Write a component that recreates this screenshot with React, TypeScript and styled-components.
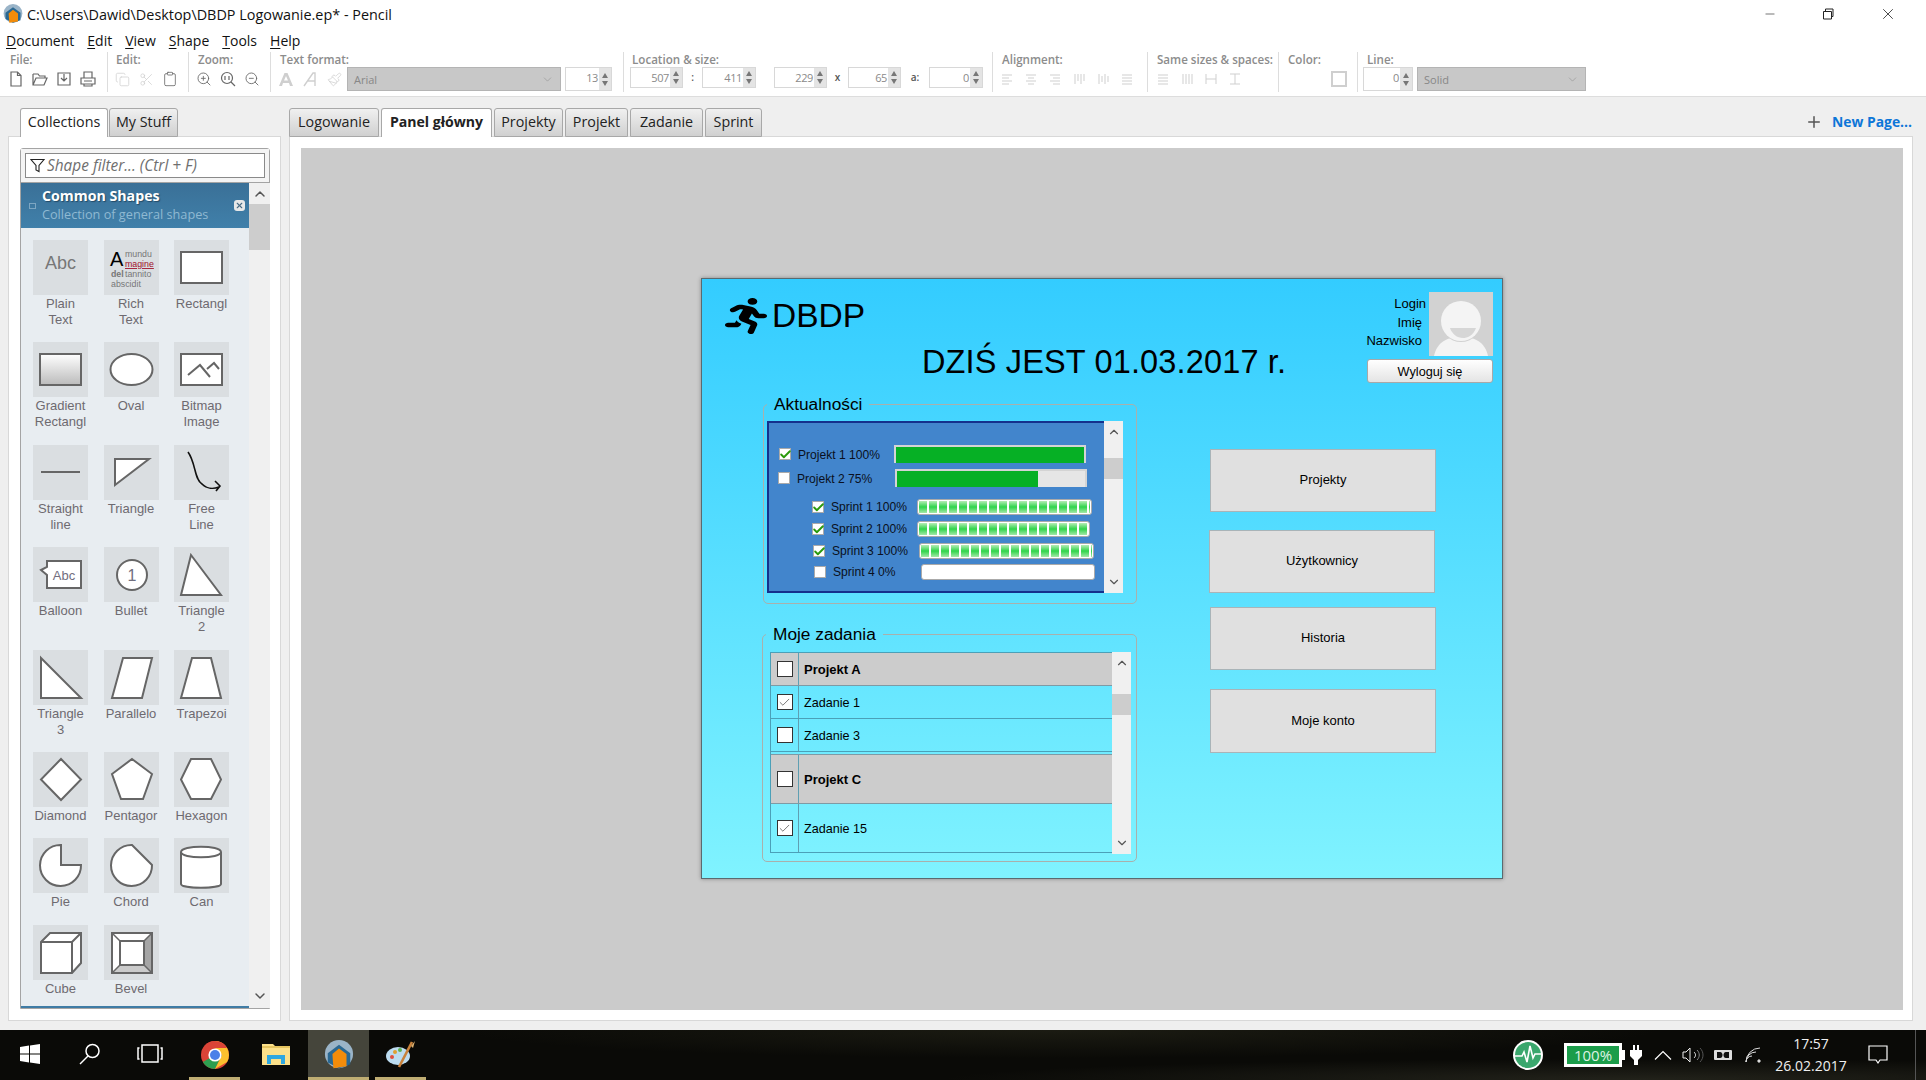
import React from "react";
import styled, { createGlobalStyle } from "styled-components";
import {
  Check,
  ChevronDown,
  ChevronUp,
  Clipboard,
  Copy,
  Minus,
  Paintbrush,
  Plus,
  Scissors,
  X,
  ZoomIn,
  ZoomOut,
} from "lucide-react";
import { FaRunning } from "react-icons/fa";

const UI_FONT = `"Open Sans", "Noto Sans", sans-serif`;
const ARIAL = `"Liberation Sans", Arial, sans-serif`;

const GlobalStyle = createGlobalStyle`
  html, body {
    margin: 0;
    padding: 0;
    height: 100%;
    overflow: hidden;
    background: #efefef;
  }
  * { box-sizing: border-box; }
`;

const Window = styled.div`
  width: 1926px;
  height: 1080px;
  display: flex;
  flex-direction: column;
  background: #efefef;
  font-family: ${UI_FONT};
  color: #111;
`;

/* title + menu */
const TitleBar = styled.div`
  height: 28px;
  flex: none;
  background: #fff;
  display: flex;
  align-items: center;
  padding-left: 3px;
  font-size: 14.4px;
`;

const TitleText = styled.span`
  margin-left: 4px;
  flex: 1;
  white-space: nowrap;
`;

const WindowControls = styled.div`
  display: flex;
  align-items: center;
  padding-right: 29px;
  gap: 45px;
`;

const MenuBar = styled.div`
  height: 24px;
  flex: none;
  background: #fff;
  display: flex;
  align-items: center;
  padding-left: 6px;
  gap: 13px;
  font-size: 14px;
`;

const MenuItem = styled.span`
  white-space: nowrap;
  u { text-underline-offset: 2px; }
`;

/* toolbar */
const Toolbar = styled.div`
  height: 45px;
  flex: none;
  background: #fff;
  border-bottom: 1px solid #ddd;
  padding-left: 8px;
  display: flex;
  align-items: flex-start;
`;

const ToolGroup = styled.div<{ $w: number; $pad?: number; $last?: boolean }>`
  width: ${(p) => p.$w}px;
  height: 40px;
  flex: none;
  padding-left: ${(p) => p.$pad ?? 9}px;
  border-right: ${(p) => (p.$last ? "none" : "1px solid #ddd")};
`;

const ToolLabel = styled.div<{ $ml?: number }>`
  height: 15px;
  line-height: 15px;
  font-size: 11.6px;
  font-weight: 600;
  color: #8c8c8c;
  white-space: nowrap;
  margin-left: ${(p) => p.$ml ?? 0}px;
`;

const ToolRow = styled.div<{ $ml?: number; $gap?: number }>`
  display: flex;
  align-items: center;
  height: 24px;
  margin-left: ${(p) => p.$ml ?? -4}px;
  gap: ${(p) => p.$gap ?? 4}px;
`;

const ToolIcon = styled.span<{ $off?: boolean }>`
  width: 20px;
  height: 20px;
  flex: none;
  display: inline-flex;
  align-items: center;
  justify-content: center;
  color: ${(p) => (p.$off ? "#cfcfcf" : "#666")};
`;

const SpinBox = styled.div<{ $w: number; $h?: number }>`
  width: ${(p) => p.$w}px;
  height: ${(p) => p.$h ?? 24}px;
  flex: none;
  display: flex;
  align-self: flex-start;
  border: 1px solid #d8d8d8;
  background: #fff;
`;

const SpinValue = styled.div`
  flex: 1;
  text-align: right;
  padding-right: 1px;
  font-family: ${UI_FONT};
  font-size: 11px;
  line-height: 19px;
  letter-spacing: -0.4px;
  color: #8a8a8a;
`;

const SpinArrows = styled.div`
  width: 12px;
  display: flex;
  flex-direction: column;
  align-items: center;
  justify-content: center;
  gap: 3px;
  background: #e4e4e4;
`;

const ArrowUp = styled.i`
  width: 0;
  height: 0;
  border-left: 3.5px solid transparent;
  border-right: 3.5px solid transparent;
  border-bottom: 5px solid #777;
`;

const ArrowDown = styled(ArrowUp)`
  border-bottom: none;
  border-top: 5px solid #777;
`;

const SelectBox = styled.div<{ $w: number; $ml?: number }>`
  width: ${(p) => p.$w}px;
  height: 24px;
  flex: none;
  margin-left: ${(p) => p.$ml ?? 0}px;
  display: flex;
  align-items: center;
  justify-content: space-between;
  padding: 0 6px;
  background: #c8c8c8;
  border: 1px solid #b4b4b4;
  color: #878787;
  font-size: 11px;
`;

const SizeSep = styled.span<{ $w: number }>`
  width: ${(p) => p.$w}px;
  flex: none;
  align-self: flex-start;
  line-height: 21px;
  text-align: center;
  font-size: 10px;
  font-weight: 600;
  color: #555;
`;

const ColorSwatch = styled.div`
  width: 16px;
  height: 16px;
  margin-left: 43px;
  border: 2px solid #cfcfcf;
  background: #fff;
`;

/* workspace */
const Workspace = styled.div`
  flex: 1;
  min-height: 0;
  display: flex;
  padding: 11px 13px 9px 8px;
  gap: 8px;
`;

const LeftColumn = styled.div`
  width: 273px;
  flex: none;
  display: flex;
  flex-direction: column;
`;

const RightColumn = styled.div`
  flex: 1;
  min-width: 0;
  display: flex;
  flex-direction: column;
`;

const TabStrip = styled.div<{ $pad?: number; $gap?: number }>`
  height: 28px;
  flex: none;
  display: flex;
  align-items: flex-start;
  padding-left: ${(p) => p.$pad ?? 0}px;
  gap: ${(p) => p.$gap ?? 2}px;
`;

const Tab = styled.div<{ $w: number; $active?: boolean; $bold?: boolean }>`
  width: ${(p) => p.$w}px;
  height: 29px;
  flex: none;
  border: 1px solid #a8a8a8;
  border-bottom: ${(p) => (p.$active ? "none" : "1px solid #a8a8a8")};
  border-radius: 3px 3px 0 0;
  background: ${(p) =>
    p.$active ? "#fff" : "linear-gradient(#f0f0f0, #d0d0d0)"};
  font-size: ${(p) => (p.$bold ? 14.1 : 14.3)}px;
  font-weight: ${(p) => (p.$bold ? 700 : 400)};
  line-height: 25px;
  text-align: center;
  white-space: nowrap;
  position: relative;
  z-index: ${(p) => (p.$active ? 1 : 0)};
  color: #222;
`;

const NewPage = styled.div`
  margin-left: auto;
  display: flex;
  align-items: center;
  height: 27px;
  gap: 9px;
  color: #0d76d8;
  font-size: 13.9px;
  font-weight: 700;
  padding-right: 1px;
  white-space: nowrap;
  svg { color: #555; }
`;

const LeftPanel = styled.div`
  flex: 1;
  min-height: 0;
  background: #fff;
  border: 1px solid #d8d8d8;
  padding: 11px 10px 11px 11px;
`;

const ShapeBox = styled.div`
  height: 100%;
  border: 1px solid #a4a4a4;
  border-radius: 3px 3px 0 0;
  display: flex;
  flex-direction: column;
`;

const FilterBar = styled.div`
  height: 34px;
  flex: none;
  padding: 4px;
  border-bottom: 1px solid #a4a4a4;
  background: #f4f4f4;
`;

const FilterInput = styled.div`
  height: 25px;
  background: #fff;
  border: 1px solid #8a8a8a;
  display: flex;
  align-items: center;
  padding-left: 4px;
  gap: 2px;
  font-size: 15.4px;
  font-style: italic;
  white-space: nowrap;
  color: #6f6f6f;
`;

const ShapeBody = styled.div`
  flex: 1;
  min-height: 0;
  display: flex;
  background: #fff;
`;

const ShapeColumn = styled.div`
  width: 228px;
  flex: none;
  background: #e8edf1;
  border-bottom: 2px solid #3f7ca5;
  display: flex;
  flex-direction: column;
  overflow: hidden;
`;

const ShapeHeader = styled.div`
  height: 45px;
  flex: none;
  position: relative;
  background: linear-gradient(#3a7097, #4080aa);
  padding: 3px 0 0 21px;
`;

const ShapeHeaderTitle = styled.div`
  font-size: 14.2px;
  font-weight: 700;
  line-height: 19px;
  color: #fff;
  text-shadow: 1px 1px 1px #234a66;
`;

const ShapeHeaderSub = styled.div`
  font-size: 12.7px;
  line-height: 18px;
  color: #8fb9d2;
  white-space: nowrap;
`;

const CollapseMark = styled.span`
  position: absolute;
  left: 8px;
  top: 20px;
  width: 7px;
  height: 6px;
  border: 1px solid #7da6c2;
  background: linear-gradient(transparent 40%, #9cc0d8 40% 60%, transparent 60%);
`;

const CloseMark = styled.span`
  position: absolute;
  right: 4px;
  top: 17px;
  width: 11px;
  height: 11px;
  border-radius: 3px;
  background: #e8e8e8;
  color: #4a6c85;
  display: flex;
  align-items: center;
  justify-content: center;
`;

const ShapeGrid = styled.div`
  display: grid;
  grid-template-columns: repeat(3, 55px);
  column-gap: 15.5px;
  row-gap: 14.4px;
  padding: 12px 0 0 12px;
  align-content: start;
`;

const ShapeItem = styled.div`
  width: 55px;
  overflow: hidden;
`;

const ShapeTile = styled.div`
  width: 55px;
  height: 55px;
  background: #dadee1;
`;

const ShapeName = styled.div`
  font-family: ${ARIAL};
  font-size: 13px;
  line-height: 16px;
  padding-top: 1px;
  color: #6e6a70;
  text-align: center;
  white-space: pre;
`;

const Scrollbar = styled.div<{ $w: number }>`
  width: ${(p) => p.$w}px;
  flex: none;
  background: #f0f0f0;
  display: flex;
  flex-direction: column;
  align-items: stretch;
`;

const ScrollArrow = styled.div<{ $h: number }>`
  height: ${(p) => p.$h}px;
  flex: none;
  display: flex;
  align-items: center;
  justify-content: center;
  color: #555;
`;

const ScrollTrack = styled.div`
  flex: 1;
  min-height: 0;
`;

const ScrollThumb = styled.div<{ $top: number; $h: number }>`
  margin-top: ${(p) => p.$top}px;
  height: ${(p) => p.$h}px;
  background: #cdcdcd;
`;

const DocPanel = styled.div`
  flex: 1;
  min-height: 0;
  background: #fff;
  border: 1px solid #d8d8d8;
  padding: 11px 9px 10px 11px;
`;

const Canvas = styled.div`
  height: 100%;
  background: #cbcbcb;
  padding: 130px 0 0 400px;
  overflow: hidden;
`;

/* the drawn page: a free canvas, every shape sits where the author dropped it */
const Page = styled.div`
  position: relative;
  width: 802px;
  height: 601px;
  border: 1px solid #5a6a70;
  box-shadow: 0 0 4px rgba(0, 0, 0, 0.35);
  background: linear-gradient(#33ccff, #80f3ff);
  font-family: ${ARIAL};
  color: #000;
`;

const RunnerMark = styled.div`
  position: absolute;
  left: 23px;
  top: 19px;
  svg {
    display: block;
    width: 42px;
    height: 36px;
  }
`;

const BrandName = styled.div`
  position: absolute;
  left: 70px;
  top: 18px;
  font-size: 33.5px;
  line-height: 38px;
`;

const DateHeading = styled.div`
  position: absolute;
  left: 220px;
  top: 64px;
  font-size: 32.5px;
  letter-spacing: 0.15px;
  line-height: 38px;
  white-space: nowrap;
`;

const UserInfo = styled.div`
  position: absolute;
  left: 640px;
  top: 16px;
  width: 80px;
  font-size: 13px;
  line-height: 18.5px;
  text-align: right;
`;

const UserLine = styled.div<{ $shift?: number }>`
  margin-right: ${(p) => p.$shift ?? 0}px;
`;

const Avatar = styled.div`
  position: absolute;
  left: 727px;
  top: 13px;
  width: 64px;
  height: 64px;
  svg { display: block; }
`;

const LogoutButton = styled.div`
  position: absolute;
  left: 665px;
  top: 80px;
  width: 126px;
  height: 24px;
  border: 1px solid #a8a8a8;
  border-radius: 3px;
  background: linear-gradient(#fff, #e4e4e4);
  text-align: center;
  font-size: 12.7px;
  line-height: 24px;
`;

const NavButton = styled.div<{ $x: number; $y: number; $h?: number }>`
  position: absolute;
  left: ${(p) => p.$x}px;
  top: ${(p) => p.$y}px;
  width: 226px;
  height: ${(p) => p.$h ?? 63}px;
  padding: 0 0 2px 0;
  background: #e0e0e0;
  border: 1px solid #a9b4b8;
  display: flex;
  align-items: center;
  justify-content: center;
  font-size: 13px;
`;

const GroupFrame = styled.fieldset<{
  $x: number;
  $y: number;
  $w: number;
  $h: number;
  $padX: number;
  $padY: number;
}>`
  position: absolute;
  left: ${(p) => p.$x}px;
  top: ${(p) => p.$y}px;
  width: ${(p) => p.$w}px;
  height: ${(p) => p.$h}px;
  margin: 0;
  padding: ${(p) => p.$padY}px 0 0 ${(p) => p.$padX}px;
  border: 1px solid #a9b0ac;
  border-radius: 5px;
  min-width: 0;
`;

const GroupTitle = styled.legend<{ $ml: number }>`
  margin-left: ${(p) => p.$ml}px;
  padding: 0 7px;
  font-size: 17.3px;
  line-height: 20px;
  white-space: nowrap;
`;

const NewsPanel = styled.div`
  display: flex;
  height: 172px;
`;

const NewsList = styled.div`
  width: 337px;
  flex: none;
  background: #4285cc;
  border: 2px solid #14308c;
  border-right: none;
`;

const NewsRow = styled.div<{ $ml: number; $mt: number }>`
  display: flex;
  align-items: center;
  margin-left: ${(p) => p.$ml}px;
  margin-top: ${(p) => p.$mt}px;
`;

const NewsCheck = styled.span`
  width: 12px;
  height: 12px;
  flex: none;
  background: #fff;
  border: 1px solid #aaa;
  display: flex;
  align-items: center;
  justify-content: center;
  color: #2a9a0c;
  svg { flex: none; }
`;

const NewsLabel = styled.span<{ $w: number; $drop?: boolean }>`
  width: ${(p) => p.$w}px;
  flex: none;
  margin-left: 7px;
  padding-top: ${(p) => (p.$drop ? 2 : 0)}px;
  font-size: 12.1px;
  white-space: nowrap;
  color: #0a1020;
`;

const SolidBar = styled.div<{ $w: number }>`
  width: ${(p) => p.$w}px;
  height: 18px;
  flex: none;
  background: #e6e6e6;
  border: 2px solid #d4d4d4;
  border-bottom: none;
`;

const SolidFill = styled.div`
  height: 100%;
  background: #06b025;
`;

const SegmentBar = styled.div<{ $w: number }>`
  width: ${(p) => p.$w}px;
  height: 16px;
  flex: none;
  background: #fff;
  border: 1px solid #aaa;
  border-radius: 3px;
  padding: 1px;
`;

const SegmentFill = styled.div`
  height: 100%;
  background:
    repeating-linear-gradient(90deg, transparent 0 8px, #fff 8px 10px),
    linear-gradient(#b5ecb5, #2fd44a 50%, #a4e8a8);
`;

const TaskPanel = styled.div`
  display: flex;
  height: 202px;
`;

const TaskTable = styled.div`
  width: 342px;
  flex: none;
  height: 201px;
  border-top: 1px solid #4ba0b8;
  border-left: 1px solid #4ba0b8;
`;

const TaskRow = styled.div<{ $h: number; $group?: boolean; $gap?: boolean }>`
  height: ${(p) => p.$h}px;
  display: flex;
  background: ${(p) => (p.$group ? "#cccccc" : "transparent")};
  border-bottom: 1px solid ${(p) => (p.$group ? "#7f9aa4" : "#4ba0b8")};
  border-top: ${(p) => (p.$gap ? "1px solid #7f9aa4" : "none")};
  margin-top: ${(p) => (p.$gap ? 2 : 0)}px;
  font-size: ${(p) => (p.$group ? 13 : 12.6)}px;
  font-weight: ${(p) => (p.$group ? 700 : 400)};
`;

const CheckCell = styled.div`
  width: 28px;
  flex: none;
  display: flex;
  align-items: center;
  justify-content: center;
  border-right: 1px solid #5f9fb2;
`;

const TaskCheck = styled.span`
  width: 16px;
  height: 16px;
  background: #fff;
  border: 1px solid #333;
  display: flex;
  align-items: center;
  justify-content: center;
  color: #666;
`;

const TaskName = styled.div<{ $group?: boolean }>`
  flex: 1;
  display: flex;
  align-items: center;
  padding: ${(p) => (p.$group ? 0 : 1)}px 0 0 5px;
`;

/* taskbar */
const Taskbar = styled.div`
  height: 50px;
  flex: none;
  position: relative;
  display: flex;
  align-items: center;
  background:
    radial-gradient(ellipse at 55% 0%, rgba(60, 60, 40, 0.35), transparent 40%),
    radial-gradient(ellipse at 85% 100%, rgba(70, 70, 55, 0.4), transparent 30%),
    #0a0a07;
  color: #fff;
`;

const TaskButton = styled.div<{
  $w: number;
  $ml?: number;
  $pl?: number;
  $active?: boolean;
  $bar?: boolean;
}>`
  width: ${(p) => p.$w}px;
  height: 50px;
  flex: none;
  margin-left: ${(p) => p.$ml ?? 0}px;
  display: flex;
  align-items: center;
  justify-content: center;
  background: ${(p) => (p.$active ? "#45453b" : "transparent")};
  border-bottom: 3px solid ${(p) => (p.$bar ? "#bfad72" : "transparent")};
  padding-top: ${(p) => (p.$bar ? 3 : 0)}px;
  padding-left: ${(p) => p.$pl ?? 0}px;
`;

const Tray = styled.div`
  margin-left: auto;
  display: flex;
  align-items: center;
  height: 50px;
  padding-right: 10px;
`;

const Battery = styled.div`
  position: relative;
  width: 58px;
  height: 24px;
  margin: 0 5px 0 21px;
  border: 3px solid #fff;
  background: #1b9d4a;
  color: #dff3e4;
  font-family: ${UI_FONT};
  font-size: 15px;
  line-height: 18px;
  text-align: center;
  &::after {
    content: "";
    position: absolute;
    right: -6px;
    top: 4px;
    width: 3px;
    height: 10px;
    background: #fff;
  }
`;

const TrayIcon = styled.div<{ $w: number; $ml?: number }>`
  width: ${(p) => p.$w}px;
  flex: none;
  margin-left: ${(p) => p.$ml ?? 0}px;
  display: flex;
  align-items: center;
  justify-content: center;
`;

const Clock = styled.div`
  width: 92px;
  flex: none;
  text-align: center;
  font-size: 14px;
  line-height: 22px;
  color: #f0f0f0;
  white-space: nowrap;
`;

const TrayEdge = styled.div`
  width: 1px;
  height: 50px;
  margin-left: 17px;
  background: #555;
`;

type ShapeDef = { name: string; art: React.ReactNode };

const st = {
  fill: "#fff",
  stroke: "#666",
  strokeWidth: 2,
} as const;

const shapes: ShapeDef[] = [
  {
    name: "Plain\nText",
    art: (
      <text x="27.5" y="29" textAnchor="middle" fontSize="18" fontFamily={ARIAL} fill="#777">
        Abc
      </text>
    ),
  },
  {
    name: "Rich\nText",
    art: (
      <g fontFamily={ARIAL} fontSize="8.8" fill="#777">
        <text x="6" y="26" fontSize="20" fill="#000">A</text>
        <text x="21" y="17">mundu</text>
        <text x="21" y="27" fill="#a0102a" textDecoration="underline">magine</text>
        <text x="7" y="37" fontWeight="700">del</text>
        <text x="21" y="37">tannito</text>
        <text x="7" y="47">abscidit</text>
      </g>
    ),
  },
  { name: "Rectangl", art: <rect x="7" y="12" width="41" height="31" {...st} /> },
  {
    name: "Gradient\nRectangl",
    art: (
      <>
        <defs>
          <linearGradient id="tileGrad" x1="0" y1="0" x2="0" y2="1">
            <stop offset="0" stopColor="#fff" />
            <stop offset="1" stopColor="#bbb" />
          </linearGradient>
        </defs>
        <rect x="7" y="12" width="41" height="31" fill="url(#tileGrad)" stroke="#666" strokeWidth="2" />
      </>
    ),
  },
  { name: "Oval", art: <ellipse cx="27.5" cy="27.5" rx="21" ry="15.5" {...st} /> },
  {
    name: "Bitmap\nImage",
    art: (
      <>
        <rect x="7" y="12" width="41" height="31" {...st} />
        <path d="M14 33 L26 23 L36 35 M33 27 L40 21 L45 27" fill="none" stroke="#666" strokeWidth="2" />
      </>
    ),
  },
  {
    name: "Straight\nline",
    art: <line x1="8" y1="27" x2="47" y2="27" stroke="#666" strokeWidth="2" />,
  },
  { name: "Triangle", art: <polygon points="11,14 45,14 11,40" {...st} /> },
  {
    name: "Free\nLine",
    art: (
      <path
        d="M14 7 C22 18 20 34 28 39 C33 44 40 44 45 42 M41 36 L46 41 L42 46"
        fill="none"
        stroke="#111"
        strokeWidth="1.6"
      />
    ),
  },
  {
    name: "Balloon",
    art: (
      <>
        <path d="M14 14 H48 V41 H14 V28 L8 23 L14 20 Z" {...st} />
        <text x="31" y="33" textAnchor="middle" fontSize="13" fontFamily={ARIAL} fill="#716e7e">
          Abc
        </text>
      </>
    ),
  },
  {
    name: "Bullet",
    art: (
      <>
        <circle cx="28" cy="28" r="15" {...st} />
        <text x="28" y="34" textAnchor="middle" fontSize="16" fontFamily={ARIAL} fill="#716e7e">
          1
        </text>
      </>
    ),
  },
  { name: "Triangle\n2", art: <polygon points="17,8 47,48 7,48" {...st} /> },
  { name: "Triangle\n3", art: <polygon points="8,8 48,48 8,48" {...st} /> },
  { name: "Parallelo", art: <polygon points="19,8 48,8 38,48 8,48" {...st} /> },
  { name: "Trapezoi", art: <polygon points="18,8 37,8 47,48 7,48" {...st} /> },
  { name: "Diamond", art: <polygon points="28,7 48,27.5 28,48 8,27.5" {...st} /> },
  { name: "Pentagor", art: <polygon points="28,7 48,22 39,47 17,47 8,22" {...st} /> },
  { name: "Hexagon", art: <polygon points="17,7 37,7 47,27.5 37,47 17,47 7,27.5" {...st} /> },
  {
    name: "Pie",
    art: <path d="M28 7 A20.5 20.5 0 1 0 48 27 H28 Z" {...st} />,
  },
  {
    name: "Chord",
    art: <path d="M28 7 L48 27 A20.5 20.5 0 1 1 28 7 Z" {...st} />,
  },
  {
    name: "Can",
    art: (
      <>
        <path d="M7 12 C7 5 47 5 47 12 V44 C47 49 7 49 7 44 Z" transform="translate(0 2)" {...st} />
        <path d="M7 14 C7 21 47 21 47 14" fill="none" stroke="#666" strokeWidth="2" />
      </>
    ),
  },
  {
    name: "Cube",
    art: (
      <>
        <path d="M8 17 L17 8 H48 V38 L39 48 H8 Z" {...st} />
        <path d="M8 17 H39 V48 M39 17 L48 8" fill="none" stroke="#666" strokeWidth="2" />
      </>
    ),
  },
  {
    name: "Bevel",
    art: (
      <>
        <rect x="8" y="8" width="40" height="40" {...st} />
        <polygon points="40,16 47,9 47,47 40,40" fill="#a5a5a5" />
        <polygon points="16,40 40,40 47,47 9,47" fill="#cbcbcb" />
        <rect x="16" y="16" width="24" height="24" fill="#fff" stroke="#666" strokeWidth="2" />
        <path d="M8 8 L16 16 M48 8 L40 16 M8 48 L16 40 M48 48 L40 40" stroke="#666" strokeWidth="1.5" />
      </>
    ),
  },
];

const news = [
  { label: "Projekt 1 100%", checked: true, value: 100, ml: 10, mt: 22, lw: 96, bw: 192 },
  { label: "Projekt 2 75%", checked: false, value: 75, ml: 9, mt: 6, lw: 98, bw: 192 },
  { label: "Sprint 1 100%", checked: true, value: 100, ml: 43, mt: 12, lw: 86, bw: 175, sprint: true },
  { label: "Sprint 2 100%", checked: true, value: 100, ml: 43, mt: 6, lw: 86, bw: 173, sprint: true },
  { label: "Sprint 3 100%", checked: true, value: 100, ml: 44, mt: 6, lw: 87, bw: 175, sprint: true },
  { label: "Sprint 4 0%", checked: false, value: 0, ml: 45, mt: 5, lw: 88, bw: 174, sprint: true },
];

const tasks = [
  { name: "Projekt A", h: 33, group: true },
  { name: "Zadanie 1", h: 33, checked: true },
  { name: "Zadanie 3", h: 33 },
  { name: "Projekt C", h: 50, group: true, gap: true },
  { name: "Zadanie 15", h: 49, checked: true },
];

const pageTabs = [
  { name: "Logowanie", w: 90 },
  { name: "Panel główny", w: 111, active: true },
  { name: "Projekty", w: 69 },
  { name: "Projekt", w: 63 },
  { name: "Zadanie", w: 73 },
  { name: "Sprint", w: 57 },
];

const Spin = ({ value, w, h }: { value: string; w: number; h?: number }) => (
  <SpinBox $w={w} $h={h}>
    <SpinValue>{value}</SpinValue>
    <SpinArrows>
      <ArrowUp />
      <ArrowDown />
    </SpinArrows>
  </SpinBox>
);

const PencilLogo = ({ size }: { size: number }) => (
  <svg width={size} height={size} viewBox="0 0 32 32">
    <circle cx="16" cy="15" r="15" fill="#9ab4c8" />
    <path d="M4 14 L16 5 L28 14 V26 L16 30 L4 24 Z" fill="#1e5f8c" opacity="0.9" />
    <path d="M16 9 L24 15 V28 L10 30 L9 15 Z" fill="#f28c0a" />
  </svg>
);

const ToolGlyph = ({ d }: { d: string }) => (
  <svg width="18" height="18" viewBox="0 0 18 18" fill="none" stroke="currentColor" strokeWidth="1.2">
    <path d={d} />
  </svg>
);

const LineGlyph = ({ d }: { d: string }) => (
  <svg width="14" height="14" viewBox="0 0 14 14" fill="none" stroke="#cfcfcf" strokeWidth="1">
    <path d={d} />
  </svg>
);

export default function App() {
  return (
    <Window>
      <GlobalStyle />
      <TitleBar>
        <PencilLogo size={20} />
        <TitleText>C:\Users\Dawid\Desktop\DBDP Logowanie.ep* - Pencil</TitleText>
        <WindowControls>
          <Minus size={14} strokeWidth={1} />
          <svg width="12" height="12" viewBox="0 0 12 12" fill="none" stroke="#222">
            <path d="M1.5 3.5 H9.5 V11 H1.5 Z M3.5 3.5 V1 H11 V8.5 H9.5" />
          </svg>
          <X size={18} strokeWidth={1} />
        </WindowControls>
      </TitleBar>

      <MenuBar>
        {["Document", "Edit", "View", "Shape", "Tools", "Help"].map((m) => (
          <MenuItem key={m}>
            <u>{m[0]}</u>
            {m.slice(1)}
          </MenuItem>
        ))}
      </MenuBar>

      <Toolbar>
        <ToolGroup $w={100} $pad={2}>
          <ToolLabel>File:</ToolLabel>
          <ToolRow>
            <ToolIcon><ToolGlyph d="M4 2 H10.5 L14 5.5 V16 H4 Z M10.5 2 V5.5 H14" /></ToolIcon>
            <ToolIcon><ToolGlyph d="M2 4 H7 L8.5 6 H14 V8 M2 4 V15 H13 L16 8 H5 L2 15" /></ToolIcon>
            <ToolIcon><ToolGlyph d="M3 3 H15 V15 H3 Z M9 4 V11 M6 8 L9 11 L12 8" /></ToolIcon>
            <ToolIcon><ToolGlyph d="M5 8 V2 H13 V8 M2 8 H16 V14 H2 Z M5 11 H13 M5 14 V16 H13 V14" /></ToolIcon>
          </ToolRow>
        </ToolGroup>
        <ToolGroup $w={81} $pad={8}>
          <ToolLabel>Edit:</ToolLabel>
          <ToolRow>
            <ToolIcon $off><Copy size={15} strokeWidth={1.2} /></ToolIcon>
            <ToolIcon $off><Scissors size={15} strokeWidth={1.2} /></ToolIcon>
            <ToolIcon><Clipboard size={16} strokeWidth={1.2} /></ToolIcon>
          </ToolRow>
        </ToolGroup>
        <ToolGroup $w={82}>
          <ToolLabel>Zoom:</ToolLabel>
          <ToolRow>
            <ToolIcon><ZoomIn size={16} strokeWidth={1.3} /></ToolIcon>
            <ToolIcon>
              <svg width="16" height="16" viewBox="0 0 16 16" fill="none" stroke="currentColor" strokeWidth="1.2">
                <circle cx="7" cy="7" r="5.5" />
                <path d="M11 11 L15 15 M5 5 V9 M9 5 V9" />
              </svg>
            </ToolIcon>
            <ToolIcon><ZoomOut size={16} strokeWidth={1.3} /></ToolIcon>
          </ToolRow>
        </ToolGroup>
        <ToolGroup $w={353}>
          <ToolLabel>Text format:</ToolLabel>
          <ToolRow>
            <ToolIcon $off>
              <svg width="16" height="16" viewBox="0 0 16 16" fill="#cfcfcf">
                <path d="M6.5 2 H9.5 L15 15 H12 L11 12 H5 L4 15 H1 Z M6 9.5 H10 L8 5 Z" fillRule="evenodd" />
              </svg>
            </ToolIcon>
            <ToolIcon $off>
              <svg width="16" height="16" viewBox="0 0 16 16" fill="none" stroke="#cfcfcf" strokeWidth="1.4">
                <path d="M2 15 L11 2 H13 L13 15 M5 10 H13" />
              </svg>
            </ToolIcon>
            <ToolIcon $off><Paintbrush size={15} strokeWidth={1.2} /></ToolIcon>
            <SelectBox $w={214} $ml={-1}>
              Arial
              <ChevronDown size={13} strokeWidth={1} color="#8a8a8a" />
            </SelectBox>
            <Spin value="13" w={47} />
          </ToolRow>
        </ToolGroup>
        <ToolGroup $w={369} $pad={8}>
          <ToolLabel>Location &amp; size:</ToolLabel>
          <ToolRow $ml={-2} $gap={0}>
            <Spin value="507" w={53} h={21} />
            <SizeSep $w={19}>:</SizeSep>
            <Spin value="411" w={54} h={21} />
            <SizeSep $w={18} />
            <Spin value="229" w={53} h={21} />
            <SizeSep $w={21}>x</SizeSep>
            <Spin value="65" w={53} h={21} />
            <SizeSep $w={28}>a:</SizeSep>
            <Spin value="0" w={54} h={21} />
          </ToolRow>
        </ToolGroup>
        <ToolGroup $w={155}>
          <ToolLabel>Alignment:</ToolLabel>
          <ToolRow $ml={-2} $gap={10}>
            <LineGlyph d="M2 3 H12 M2 6 H9 M2 9 H12 M2 12 H9" />
            <LineGlyph d="M2 3 H12 M4 6 H10 M2 9 H12 M4 12 H10" />
            <LineGlyph d="M2 3 H12 M5 6 H12 M2 9 H12 M5 12 H12" />
            <LineGlyph d="M3 2 V12 M6 2 V9 M9 2 V12 M12 2 V9" />
            <LineGlyph d="M3 2 V12 M6 4 V10 M9 2 V12 M12 4 V10" />
            <LineGlyph d="M2 3 H12 M2 6 H12 M2 9 H12 M2 12 H12" />
          </ToolRow>
        </ToolGroup>
        <ToolGroup $w={131}>
          <ToolLabel>Same sizes &amp; spaces:</ToolLabel>
          <ToolRow $ml={-1} $gap={10}>
            <LineGlyph d="M2 3 H12 M2 6 H12 M2 9 H12 M2 12 H12" />
            <LineGlyph d="M3 2 V12 M6 2 V12 M9 2 V12 M12 2 V12" />
            <LineGlyph d="M2 2 V12 M12 2 V12 M2 7 H12" />
            <LineGlyph d="M2 2 H12 M2 12 H12 M7 2 V12" />
          </ToolRow>
        </ToolGroup>
        <ToolGroup $w={79}>
          <ToolLabel>Color:</ToolLabel>
          <ToolRow $ml={0}>
            <ColorSwatch />
          </ToolRow>
        </ToolGroup>
        <ToolGroup $w={240} $pad={5} $last>
          <ToolLabel $ml={4}>Line:</ToolLabel>
          <ToolRow $ml={0} $gap={4}>
            <Spin value="0" w={50} />
            <SelectBox $w={169}>
              Solid
              <ChevronDown size={13} strokeWidth={1} color="#8a8a8a" />
            </SelectBox>
          </ToolRow>
        </ToolGroup>
      </Toolbar>

      <Workspace>
        <LeftColumn>
          <TabStrip $pad={12} $gap={1}>
            <Tab $w={88} $active>Collections</Tab>
            <Tab $w={69}>My Stuff</Tab>
          </TabStrip>
          <LeftPanel>
            <ShapeBox>
              <FilterBar>
                <FilterInput>
                  <svg width="15" height="15" viewBox="0 0 15 15" fill="none" stroke="#222" strokeWidth="1.1">
                    <path d="M1 1.5 H14 L9 7.5 V13.5 L6 12 V7.5 Z" />
                  </svg>
                  Shape filter... (Ctrl + F)
                </FilterInput>
              </FilterBar>
              <ShapeBody>
                <ShapeColumn>
                  <ShapeHeader>
                    <CollapseMark />
                    <ShapeHeaderTitle>Common Shapes</ShapeHeaderTitle>
                    <ShapeHeaderSub>Collection of general shapes</ShapeHeaderSub>
                    <CloseMark>
                      <X size={9} strokeWidth={3} />
                    </CloseMark>
                  </ShapeHeader>
                  <ShapeGrid>
                    {shapes.map((s) => (
                      <ShapeItem key={s.name}>
                        <ShapeTile>
                          <svg width="55" height="55" viewBox="0 0 55 55">
                            {s.art}
                          </svg>
                        </ShapeTile>
                        <ShapeName>{s.name}</ShapeName>
                      </ShapeItem>
                    ))}
                  </ShapeGrid>
                </ShapeColumn>
                <Scrollbar $w={21}>
                  <ScrollArrow $h={21}><ChevronUp size={16} strokeWidth={2.2} /></ScrollArrow>
                  <ScrollTrack>
                    <ScrollThumb $top={0} $h={46} />
                  </ScrollTrack>
                  <ScrollArrow $h={24}><ChevronDown size={16} strokeWidth={2.2} /></ScrollArrow>
                </Scrollbar>
              </ShapeBody>
            </ShapeBox>
          </LeftPanel>
        </LeftColumn>

        <RightColumn>
          <TabStrip>
            {pageTabs.map((t) => (
              <Tab key={t.name} $w={t.w} $active={t.active} $bold={t.active}>
                {t.name}
              </Tab>
            ))}
            <NewPage>
              <Plus size={18} strokeWidth={2} />
              New Page...
            </NewPage>
          </TabStrip>
          <DocPanel>
            <Canvas>
              <Page>
                <RunnerMark>
                  <FaRunning preserveAspectRatio="none" />
                </RunnerMark>
                <BrandName>DBDP</BrandName>
                <DateHeading>DZIŚ JEST 01.03.2017 r.</DateHeading>
                <UserInfo>
                  <UserLine $shift={-4}>Login</UserLine>
                  <UserLine>Imię</UserLine>
                  <UserLine>Nazwisko</UserLine>
                </UserInfo>
                <Avatar>
                  <svg width="64" height="64" viewBox="0 0 64 64">
                    <rect width="64" height="64" fill="#d2d2d2" />
                    <path d="M5 64 C8 50 18 45 32 45 C46 45 56 50 59 64 Z" fill="#f4f4f4" />
                    <circle cx="32" cy="29" r="21" fill="#d2d2d2" />
                    <circle cx="32" cy="29" r="20" fill="#f4f4f4" />
                    <path d="M21 36 H47 C44 44 38 46 34 46 C28 46 23 42 21 36 Z" fill="#d6d6d6" />
                  </svg>
                </Avatar>
                <LogoutButton>Wyloguj się</LogoutButton>

                <GroupFrame $x={61} $y={115} $w={374} $h={210} $padX={3} $padY={7}>
                  <GroupTitle $ml={0}>Aktualności</GroupTitle>
                  <NewsPanel>
                    <NewsList>
                      {news.map((n) => (
                        <NewsRow key={n.label} $ml={n.ml} $mt={n.mt}>
                          <NewsCheck>
                            {n.checked && <Check size={13} strokeWidth={3.5} />}
                          </NewsCheck>
                          <NewsLabel $w={n.lw} $drop={!n.sprint}>{n.label}</NewsLabel>
                          {n.sprint ? (
                            <SegmentBar $w={n.bw}>
                              {n.value > 0 && <SegmentFill style={{ width: `${n.value}%` }} />}
                            </SegmentBar>
                          ) : (
                            <SolidBar $w={n.bw}>
                              <SolidFill style={{ width: `${n.value}%` }} />
                            </SolidBar>
                          )}
                        </NewsRow>
                      ))}
                    </NewsList>
                    <Scrollbar $w={19}>
                      <ScrollArrow $h={22}><ChevronUp size={14} strokeWidth={2} /></ScrollArrow>
                      <ScrollTrack>
                        <ScrollThumb $top={15} $h={21} />
                      </ScrollTrack>
                      <ScrollArrow $h={22}><ChevronDown size={14} strokeWidth={2} /></ScrollArrow>
                    </Scrollbar>
                  </NewsPanel>
                </GroupFrame>

                <GroupFrame $x={60} $y={345} $w={375} $h={238} $padX={7} $padY={8}>
                  <GroupTitle $ml={-4}>Moje zadania</GroupTitle>
                  <TaskPanel>
                    <TaskTable>
                      {tasks.map((t) => (
                        <TaskRow key={t.name} $h={t.h} $group={t.group} $gap={t.gap}>
                          <CheckCell>
                            <TaskCheck>
                              {t.checked && <Check size={13} strokeWidth={1.6} />}
                            </TaskCheck>
                          </CheckCell>
                          <TaskName $group={t.group}>{t.name}</TaskName>
                        </TaskRow>
                      ))}
                    </TaskTable>
                    <Scrollbar $w={19}>
                      <ScrollArrow $h={22}><ChevronUp size={14} strokeWidth={2} /></ScrollArrow>
                      <ScrollTrack>
                        <ScrollThumb $top={20} $h={21} />
                      </ScrollTrack>
                      <ScrollArrow $h={22}><ChevronDown size={14} strokeWidth={2} /></ScrollArrow>
                    </Scrollbar>
                  </TaskPanel>
                </GroupFrame>

                <NavButton $x={508} $y={170}>Projekty</NavButton>
                <NavButton $x={507} $y={251}>Użytkownicy</NavButton>
                <NavButton $x={508} $y={328}>Historia</NavButton>
                <NavButton $x={508} $y={410} $h={64}>Moje konto</NavButton>
              </Page>
            </Canvas>
          </DocPanel>
        </RightColumn>
      </Workspace>

      <Taskbar>
        <TaskButton $w={60}>
          <svg width="20" height="20" viewBox="0 0 20 20" fill="#fff">
            <path d="M0 3 L9 1.6 V9.4 H0 Z M10 1.4 L20 0 V9.4 H10 Z M0 10.4 H9 V18.4 L0 17 Z M10 10.4 H20 V20 L10 18.6 Z" />
          </svg>
        </TaskButton>
        <TaskButton $w={60}>
          <svg width="22" height="22" viewBox="0 0 22 22" fill="none" stroke="#fff" strokeWidth="1.5">
            <circle cx="13.5" cy="8" r="6.5" />
            <path d="M9 13 L1 21" />
          </svg>
        </TaskButton>
        <TaskButton $w={60}>
          <svg width="26" height="20" viewBox="0 0 26 20" fill="none" stroke="#fff" strokeWidth="1.5">
            <rect x="5" y="1" width="16" height="17" />
            <path d="M2.5 4 H1 V15 H2.5 M23.5 4 H25 V15 H23.5" />
          </svg>
        </TaskButton>
        <TaskButton $w={51} $ml={9} $bar>
          <svg width="28" height="28" viewBox="0 0 28 28">
            <circle cx="14" cy="14" r="14" fill="#db4437" />
            <path d="M14 14 L1.9 21 A14 14 0 0 0 14 28 L21 14 Z" fill="#2e9e4f" />
            <path d="M14 0 A14 14 0 0 1 26.1 21 L14 28 L21 14 L14 7 Z" fill="#fbc02d" />
            <path d="M14 7 H26.1 A14 14 0 0 0 14 0 A14 14 0 0 0 3.5 4.7 L9 14 Z" fill="#db4437" />
            <circle cx="14" cy="14" r="6.6" fill="#fff" />
            <circle cx="14" cy="14" r="5" fill="#4a80e8" />
          </svg>
        </TaskButton>
        <TaskButton $w={68} $pl={3}>
          <svg width="28" height="24" viewBox="0 0 28 24">
            <path d="M0 2 H11 L13 4 H28 V23 H0 Z" fill="#fbe08a" />
            <rect x="0" y="4" width="28" height="2" fill="#e5c45f" />
            <path d="M5 22 V13 H23 V22 H19 V17 H9 V22 Z" fill="#2ea7e0" />
          </svg>
        </TaskButton>
        <TaskButton $w={61} $active $bar>
          <PencilLogo size={30} />
        </TaskButton>
        <TaskButton $w={51} $ml={6} $bar>
          <svg width="30" height="30" viewBox="0 0 30 30">
            <ellipse cx="12" cy="16" rx="12" ry="9" fill="#bcdcf0" />
            <circle cx="6" cy="17" r="2" fill="#e05040" />
            <circle cx="9" cy="12" r="2" fill="#e0a030" />
            <circle cx="14" cy="10" r="2" fill="#60b050" />
            <path d="M26 2 L13 27" stroke="#c8813a" strokeWidth="2.6" />
            <path d="M25 6 L29 1 L27 8 Z" fill="#dcb070" />
          </svg>
        </TaskButton>

        <Tray>
          <svg width="30" height="30" viewBox="0 0 30 30">
            <circle cx="15" cy="15" r="15" fill="#fff" />
            <circle cx="15" cy="15" r="13" fill="#3aa76d" />
            <path d="M2 16 H9 L11 12 L14 22 L17 6 L20 18 L22 14 H28" fill="none" stroke="#fff" strokeWidth="1.6" />
          </svg>
          <Battery>100%</Battery>
          <TrayIcon $w={18}>
            <svg width="12" height="20" viewBox="0 0 12 20" fill="#fff">
              <path d="M3 0 H5 V5 H7 V0 H9 V5 H12 V11 L8 15 V20 H4 V15 L0 11 V5 H3 Z" />
            </svg>
          </TrayIcon>
          <TrayIcon $w={36}>
            <svg width="18" height="10" viewBox="0 0 18 10" fill="none" stroke="#fff" strokeWidth="1.2">
              <path d="M1 9.5 L9 1.5 L17 9.5" />
            </svg>
          </TrayIcon>
          <TrayIcon $w={24}>
            <svg width="22" height="16" viewBox="0 0 22 16" fill="none" stroke="#eee" strokeWidth="1">
              <path d="M1 5 H4 L8 1 V15 L4 11 H1 Z" />
              <path d="M12 5 C14 7 14 9 12 11" />
              <path d="M15 3 C18 6 18 10 15 13" stroke="#888" />
              <path d="M18 1 C22 5 22 11 18 15" stroke="#555" />
            </svg>
          </TrayIcon>
          <TrayIcon $w={36}>
            <svg width="18" height="10" viewBox="0 0 18 10" fill="#ddd">
              <rect width="18" height="10" rx="1" />
              <path d="M3 2 H6 C8 2 8.5 4 8.5 5 C8.5 6 8 8 6 8 H3 Z M15 2 H12 C10 2 9.5 4 9.5 5 C9.5 6 10 8 12 8 H15 Z" fill="#111" />
            </svg>
          </TrayIcon>
          <TrayIcon $w={24}>
            <svg width="16" height="16" viewBox="0 0 16 16" fill="none" stroke="#ddd" strokeWidth="1">
              <path d="M1 15 A14 14 0 0 1 15 1 M1 15 A10 10 0 0 1 11 5 M1 15 A6 6 0 0 1 7 9" />
              <circle cx="14" cy="14" r="1.2" fill="#ddd" />
            </svg>
          </TrayIcon>
          <Clock>
            17:57
            <br />
            26.02.2017
          </Clock>
          <TrayIcon $w={40} $ml={1}>
            <svg width="20" height="20" viewBox="0 0 20 20" fill="none" stroke="#fff" strokeWidth="1.2">
              <path d="M1 1 H19 V15 H12 L10 18 L8 15 H1 Z" />
            </svg>
          </TrayIcon>
          <TrayEdge />
        </Tray>
      </Taskbar>
    </Window>
  );
}
